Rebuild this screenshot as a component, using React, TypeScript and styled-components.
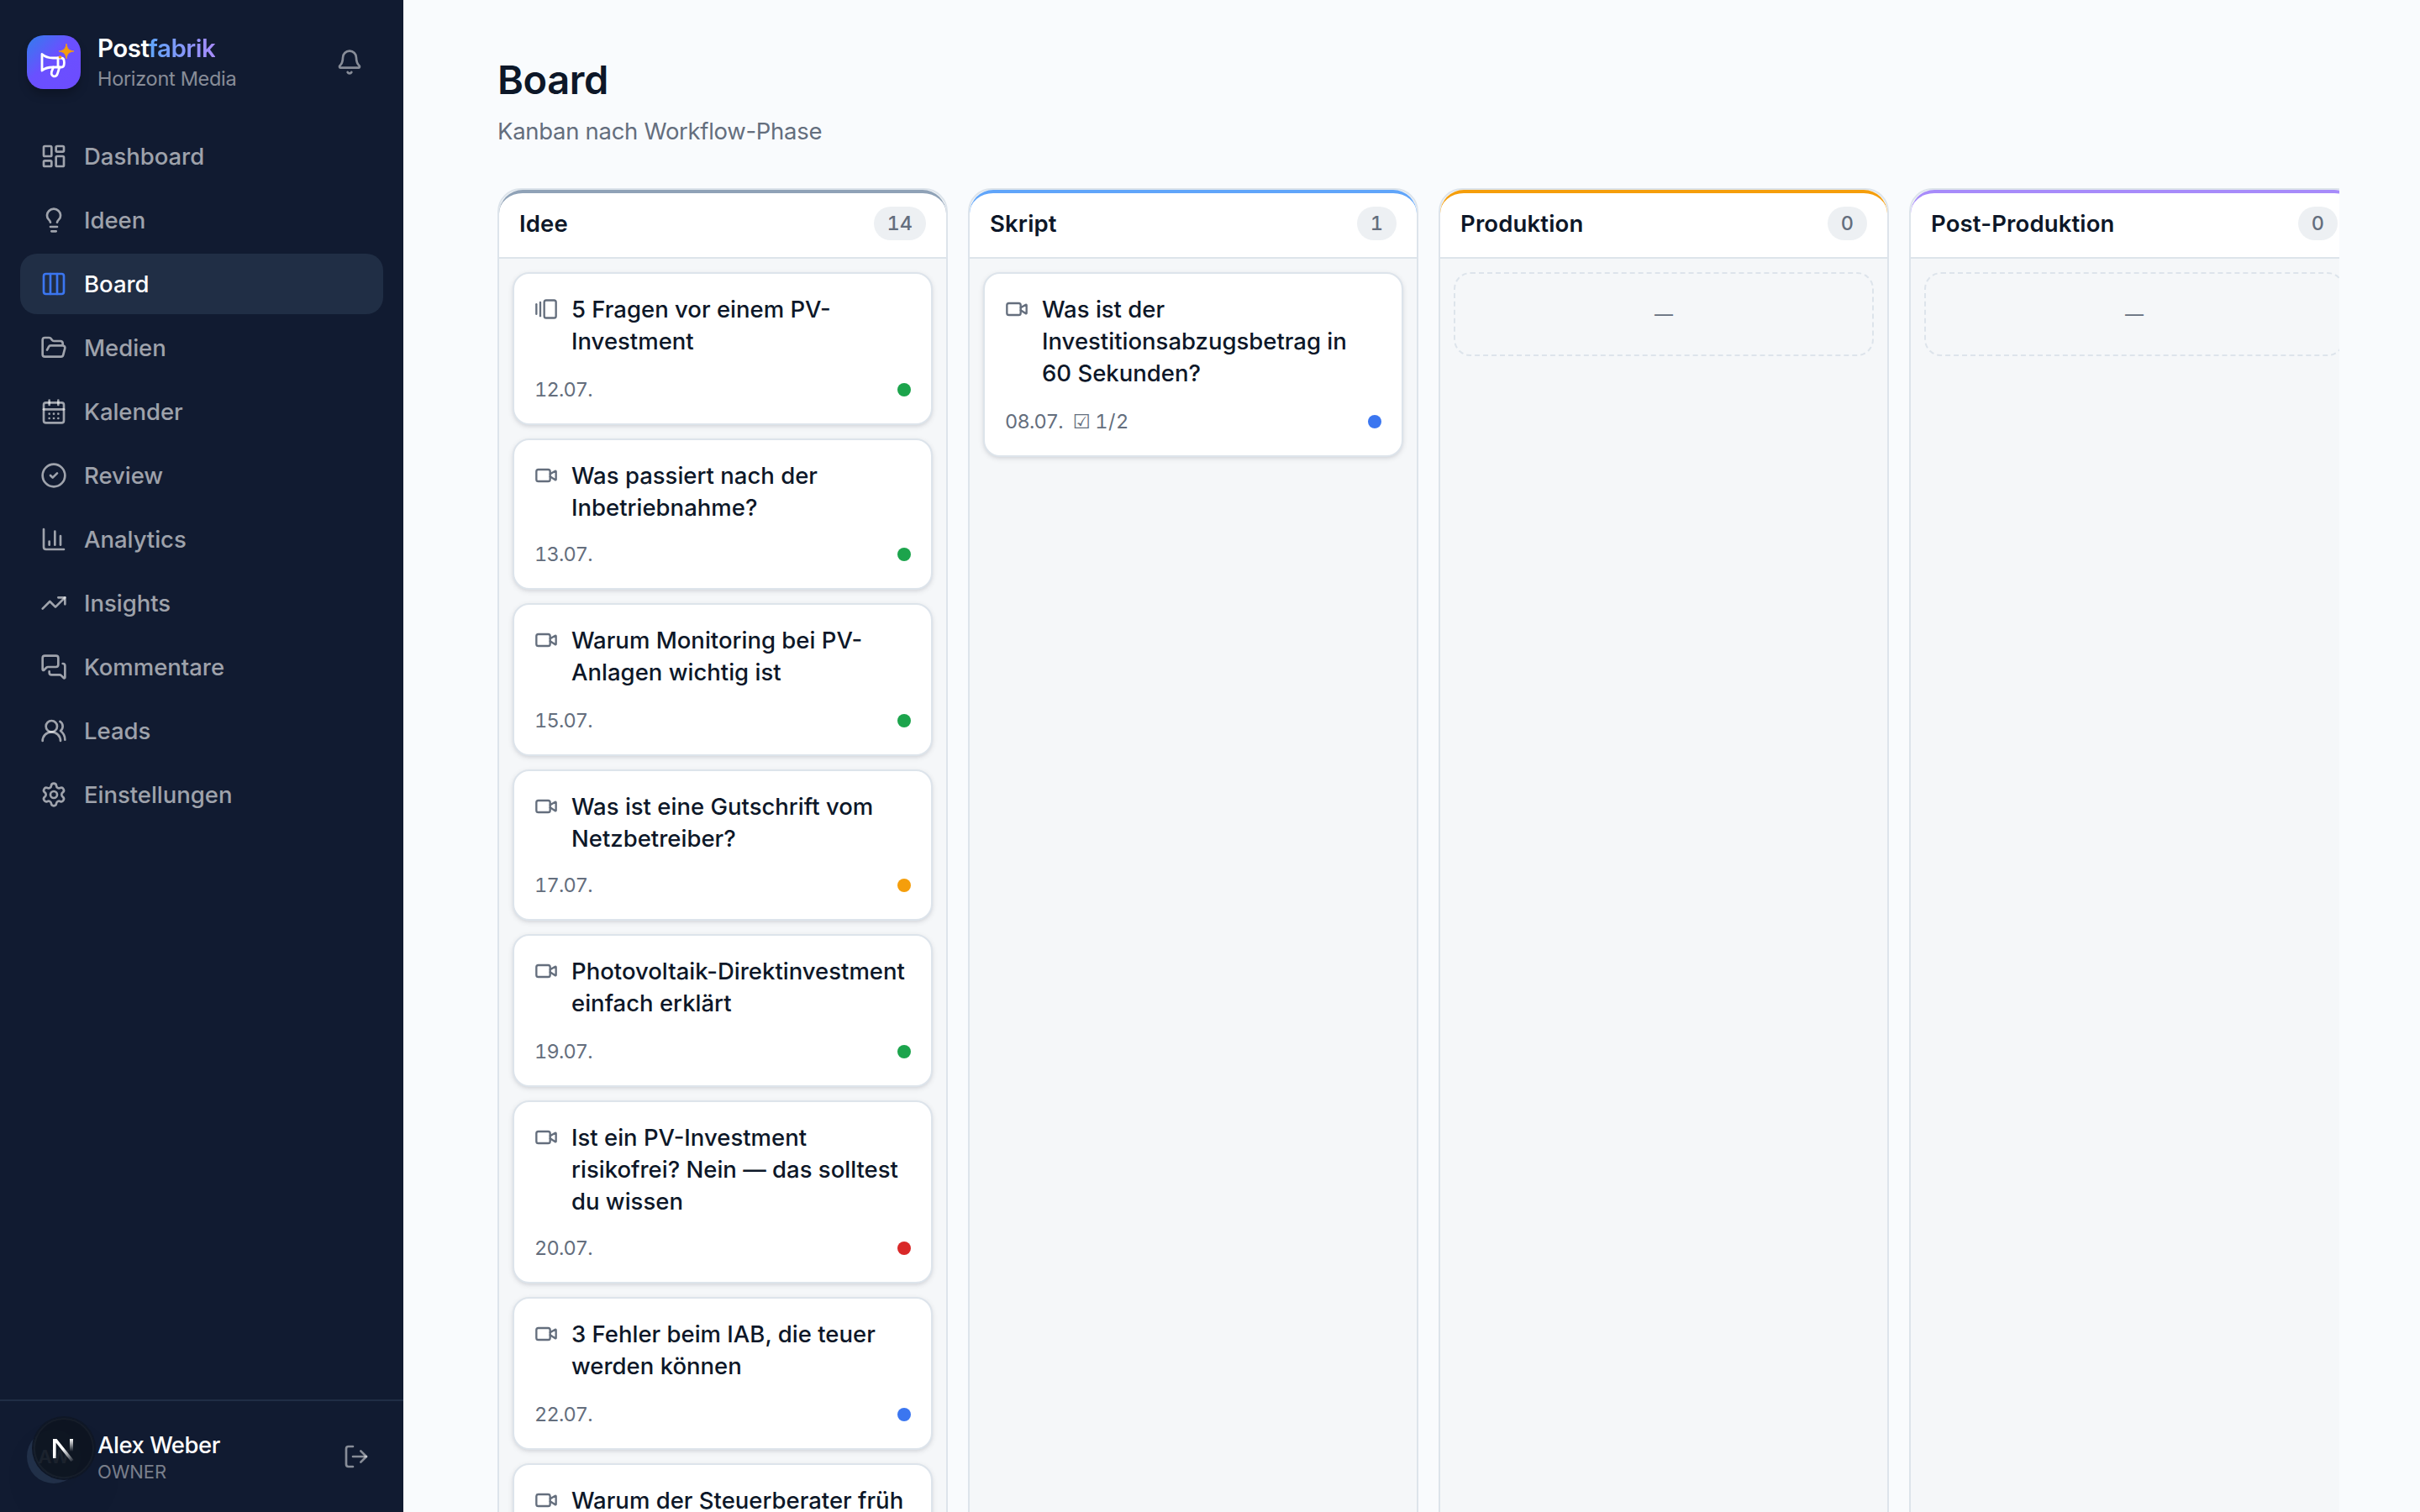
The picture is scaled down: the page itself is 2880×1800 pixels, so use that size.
import React from 'react';
import styled, { createGlobalStyle } from 'styled-components';
import {
  Bell,
  CalendarDays,
  ChartColumn,
  CircleCheck,
  Columns3,
  FolderOpen,
  GalleryHorizontalEnd,
  LayoutDashboard,
  Lightbulb,
  LogOut,
  MessagesSquare,
  Settings,
  TrendingUp,
  UsersRound,
  Video,
} from 'lucide-react';

const GlobalStyle = createGlobalStyle`
  * { box-sizing: border-box; }
  body {
    margin: 0;
    overflow: hidden;
    background: #f9fbfd;
    color: #0d1728;
    font-family: Inter, "Liberation Sans", sans-serif;
  }
  h1, h2, h3, p { margin: 0; font-weight: inherit; }
`;

const Shell = styled.div`
  display: flex;
  height: 1800px;
  overflow: hidden;
`;

const Sidebar = styled.aside`
  display: flex;
  flex-direction: column;
  flex: none;
  width: 480px;
  background: #111b31;
`;

const Brand = styled.div`
  display: flex;
  align-items: center;
  height: 148px;
  padding: 0 48px 0 32px;
`;

const LogoTile = styled.div`
  width: 64px;
  height: 64px;
  border-radius: 20px;
  background: linear-gradient(135deg, #3b76f0 8%, #6a50ff 45%, #6d4cff);
  box-shadow: 0 8px 12px -2px rgba(0, 0, 0, 0.25);
`;

const BrandText = styled.div`
  flex: 1;
  margin-left: 20px;
  padding-top: 2px;
`;

const BrandName = styled.div`
  font-size: 29.5px;
  line-height: 36px;
  font-weight: 600;
  letter-spacing: -0.5px;
  color: #fff;

  span {
    background: linear-gradient(90deg, #60a5fa, #a78bfa);
    background-clip: text;
    color: transparent;
  }
`;

const BrandOrg = styled.div`
  font-size: 23.5px;
  line-height: 37px;
  letter-spacing: -0.3px;
  color: rgba(255, 255, 255, 0.5);
`;

const IconButton = styled.button`
  display: flex;
  padding: 0;
  border: 0;
  background: none;
  color: rgba(255, 255, 255, 0.5);
`;

const Nav = styled.nav`
  display: flex;
  flex-direction: column;
  flex: 1;
  gap: 4px;
  padding: 2px 24px;
`;

const NavItem = styled.a<{ $active?: boolean }>`
  display: flex;
  align-items: center;
  gap: 20px;
  height: 72px;
  padding: 0 24px;
  border-radius: 20px;
  font-size: 27.5px;
  font-weight: 500;
  letter-spacing: -0.03px;
  color: ${p => (p.$active ? '#fff' : 'rgba(255, 255, 255, 0.6)')};
  background: ${p => (p.$active ? '#202e45' : 'transparent')};

  svg {
    color: ${p => (p.$active ? '#3b76f0' : 'inherit')};
  }
`;

const UserBar = styled.div`
  position: relative;
  display: flex;
  align-items: center;
  height: 134px;
  padding: 0 40px 0 32px;
  border-top: 2px solid #202e45;
`;

const Avatar = styled.div`
  width: 64px;
  height: 64px;
  border-radius: 50%;
  background: #22314a;
  color: #fff;
  font-size: 22px;
  font-weight: 600;
  line-height: 64px;
  text-align: center;
`;

const UserText = styled.div`
  flex: 1;
  margin-left: 20px;
  padding-top: 4px;
`;

const UserName = styled.div`
  font-size: 27.5px;
  line-height: 32px;
  font-weight: 500;
  letter-spacing: -0.5px;
  color: #fff;
`;

const UserRole = styled.div`
  font-size: 22px;
  line-height: 32px;
  letter-spacing: -0.1px;
  color: rgba(255, 255, 255, 0.45);
`;

// floating dev badge, sits over the avatar
const DevBadge = styled.div`
  position: absolute;
  left: 40px;
  top: 20px;
  width: 72px;
  height: 72px;
  border-radius: 50%;
  background: rgba(13, 20, 32, 0.94);
  box-shadow: 0 0 0 2px #0f1726, inset 0 0 0 2px rgba(255, 255, 255, 0.04),
    0 32px 64px -16px rgba(0, 0, 0, 0.14);
`;

const Main = styled.main`
  flex: 1;
  min-width: 0;
  padding: 64px 96px 0 112px;
`;

const Title = styled.h1`
  font-size: 47px;
  line-height: 62px;
  font-weight: 600;
  letter-spacing: -0.4px;
`;

const Subtitle = styled.p`
  margin-top: 10px;
  font-size: 27.5px;
  line-height: 40px;
  letter-spacing: -0.3px;
  color: #646e7d;
`;

const Columns = styled.div`
  display: flex;
  gap: 24px;
  margin-top: 48px;
  overflow: hidden;
`;

const Column = styled.section`
  flex: none;
  width: 536px;
  border: 2px solid #dde4eb;
  border-radius: 28px;
  background: #f5f7f9;
`;

const ColumnHead = styled.header<{ $accent: string }>`
  display: flex;
  align-items: center;
  justify-content: space-between;
  height: 82px;
  padding: 0 24px 4px;
  border-top: 4px solid ${p => p.$accent};
  border-bottom: 2px solid #dde4eb;
  border-radius: 28px 28px 0 0;
  background: #fff;
`;

const ColumnTitle = styled.h2`
  font-size: 27.5px;
  line-height: 40px;
  font-weight: 600;
  letter-spacing: 0.15px;
`;

const Count = styled.span`
  min-width: 46px;
  padding: 0 16px;
  border-radius: 20px;
  background: #edf0f3;
  color: #646e7d;
  font-size: 23.5px;
  line-height: 40px;
  font-weight: 500;
  font-variant-numeric: tabular-nums;
  text-align: center;
`;

const CardList = styled.div`
  display: flex;
  flex-direction: column;
  gap: 16px;
  padding: 16px;
`;

const CardBox = styled.article`
  padding: 24px;
  border: 2px solid #dde4eb;
  border-radius: 20px;
  background: #fff;
  box-shadow: 0 2px 6px rgba(15, 23, 42, 0.1), 0 2px 4px -2px rgba(15, 23, 42, 0.1);
`;

const CardTop = styled.div`
  display: flex;
  gap: 16px;
  color: #646e7d;

  svg {
    flex: none;
    margin-top: 4px;
  }

  ${CardBox}:nth-child(odd) & {
    padding-bottom: 2px;
  }
`;

const CardTitle = styled.h3`
  margin: -1px 0 1px;
  font-size: 27.5px;
  line-height: 38px;
  font-weight: 500;
  color: #0d1728;
  white-space: pre-line;
`;

const CardFoot = styled.div`
  display: flex;
  align-items: center;
  gap: 12px;
  margin-top: 20px;
  height: 32px;
  font-size: 23.5px;
  line-height: 30px;
  font-variant-numeric: tabular-nums;
  color: #646e7d;
`;

const DueDate = styled.span`
  margin-top: -1px;
  letter-spacing: -0.8px;
`;

const Tasks = styled.span`
  margin-top: -1px;
  letter-spacing: 0.5px;
`;

const Check = styled.span`
  font-family: "DejaVu Sans", sans-serif;
  margin-right: 5px;
`;

const Dot = styled.span<{ $color: string }>`
  width: 16px;
  height: 16px;
  margin-left: auto;
  border-radius: 50%;
  background: ${p => p.$color};
`;

const Empty = styled.div`
  height: 100px;
  border: 2px dashed #dde4eb;
  border-radius: 20px;
  color: #646e7d;
  font-size: 22px;
  line-height: 96px;
  text-align: center;
`;

const GREEN = '#1ca44c';
const BLUE = '#3b76f0';
const AMBER = '#f59e0b';
const RED = '#d92828';

const nav = [
  { label: 'Dashboard', icon: LayoutDashboard },
  { label: 'Ideen', icon: Lightbulb },
  { label: 'Board', icon: Columns3, active: true },
  { label: 'Medien', icon: FolderOpen },
  { label: 'Kalender', icon: CalendarDays },
  { label: 'Review', icon: CircleCheck },
  { label: 'Analytics', icon: ChartColumn },
  { label: 'Insights', icon: TrendingUp },
  { label: 'Kommentare', icon: MessagesSquare },
  { label: 'Leads', icon: UsersRound },
  { label: 'Einstellungen', icon: Settings },
];

type CardData = {
  title: string;
  date: string;
  color: string;
  carousel?: boolean;
  tasks?: string;
};

type ColumnData = {
  title: string;
  count: number;
  accent: string;
  cards: CardData[];
};

const columns: ColumnData[] = [
  {
    title: 'Idee',
    count: 14,
    accent: '#8fa2b7',
    cards: [
      { title: '5 Fragen vor einem PV-\nInvestment', date: '12.07.', color: GREEN, carousel: true },
      { title: 'Was passiert nach der\nInbetriebnahme?', date: '13.07.', color: GREEN },
      { title: 'Warum Monitoring bei PV-\nAnlagen wichtig ist', date: '15.07.', color: GREEN },
      { title: 'Was ist eine Gutschrift vom\nNetzbetreiber?', date: '17.07.', color: AMBER },
      { title: 'Photovoltaik-Direktinvestment\neinfach erklärt', date: '19.07.', color: GREEN },
      { title: 'Ist ein PV-Investment\nrisikofrei? Nein — das solltest\ndu wissen', date: '20.07.', color: RED },
      { title: '3 Fehler beim IAB, die teuer\nwerden können', date: '22.07.', color: BLUE },
      { title: 'Warum der Steuerberater früh', date: '24.07.', color: GREEN },
    ],
  },
  {
    title: 'Skript',
    count: 1,
    accent: '#60a5fa',
    cards: [
      {
        title: 'Was ist der\nInvestitionsabzugsbetrag in\n60 Sekunden?',
        date: '08.07.',
        color: BLUE,
        tasks: '1/2',
      },
    ],
  },
  { title: 'Produktion', count: 0, accent: AMBER, cards: [] },
  { title: 'Post-Produktion', count: 0, accent: '#a78bfa', cards: [] },
];

const Logo = () => (
  <LogoTile>
    <svg width="64" height="64" viewBox="0 0 64 64" fill="none">
      <g stroke="#fff" strokeWidth="2.8" strokeLinejoin="round" strokeLinecap="round">
        <path d="M18 22.5C22 26 26 27 31 27H41C43.4 27 44.4 29.2 44.4 32.4S43.4 38 41 38H31C26 38 22 38.5 18 42Z" />
        <path d="M37 27V38" />
        <path d="M31.5 38L29.4 43.6C28 49.6 35 51 36.6 45.2L38.8 38" />
      </g>
      <path
        d="M47 10C47.8 16 50 18.2 56 19C50 19.8 47.8 22 47 28C46.2 22 44 19.8 38 19C44 18.2 46.2 16 47 10Z"
        fill="#f59e0b"
        stroke="#f59e0b"
        strokeWidth="0.8"
      />
      <circle cx="39.5" cy="26" r="1.8" fill="#f59e0b" />
    </svg>
  </LogoTile>
);

const DevMark = () => (
  <DevBadge>
    <svg width="72" height="72" viewBox="0 0 72 72" fill="none">
      <defs>
        <linearGradient id="diag" x1="36" y1="36" x2="47" y2="51" gradientUnits="userSpaceOnUse">
          <stop stopColor="#fff" />
          <stop offset="1" stopColor="#fff" stopOpacity="0.1" />
        </linearGradient>
        <linearGradient id="stem" x1="45" y1="25" x2="45" y2="40" gradientUnits="userSpaceOnUse">
          <stop stopColor="#fff" />
          <stop offset="1" stopColor="#fff" stopOpacity="0" />
        </linearGradient>
      </defs>
      <path d="M23 25H27.5L47.5 50L44.5 52L26.6 29.4V48H23Z" fill="url(#diag)" />
      <rect x="43" y="25" width="4" height="15" fill="url(#stem)" />
    </svg>
  </DevBadge>
);

const Card = ({ card }: { card: CardData }) => {
  const Icon = card.carousel ? GalleryHorizontalEnd : Video;
  return (
    <CardBox>
      <CardTop>
        <Icon size={28} strokeWidth={2} />
        <CardTitle>{card.title}</CardTitle>
      </CardTop>
      <CardFoot>
        <DueDate>{card.date}</DueDate>
        {card.tasks && (
          <Tasks>
            <Check>☑</Check>
            {card.tasks}
          </Tasks>
        )}
        <Dot $color={card.color} />
      </CardFoot>
    </CardBox>
  );
};

export default function App() {
  return (
    <Shell>
      <GlobalStyle />
      <Sidebar>
        <Brand>
          <Logo />
          <BrandText>
            <BrandName>
              Post<span>fabrik</span>
            </BrandName>
            <BrandOrg>Horizont Media</BrandOrg>
          </BrandText>
          <IconButton>
            <Bell size={32} />
          </IconButton>
        </Brand>
        <Nav>
          {nav.map(({ label, icon: Icon, active }) => (
            <NavItem key={label} $active={active}>
              <Icon size={32} />
              {label}
            </NavItem>
          ))}
        </Nav>
        <UserBar>
          <Avatar>AW</Avatar>
          <UserText>
            <UserName>Alex Weber</UserName>
            <UserRole>OWNER</UserRole>
          </UserText>
          <IconButton>
            <LogOut size={32} />
          </IconButton>
          <DevMark />
        </UserBar>
      </Sidebar>

      <Main>
        <Title>Board</Title>
        <Subtitle>Kanban nach Workflow-Phase</Subtitle>
        <Columns>
          {columns.map(col => (
            <Column key={col.title}>
              <ColumnHead $accent={col.accent}>
                <ColumnTitle>{col.title}</ColumnTitle>
                <Count>{col.count}</Count>
              </ColumnHead>
              <CardList>
                {col.cards.map(card => (
                  <Card key={card.title} card={card} />
                ))}
                {col.cards.length === 0 && <Empty>—</Empty>}
              </CardList>
            </Column>
          ))}
        </Columns>
      </Main>
    </Shell>
  );
}
